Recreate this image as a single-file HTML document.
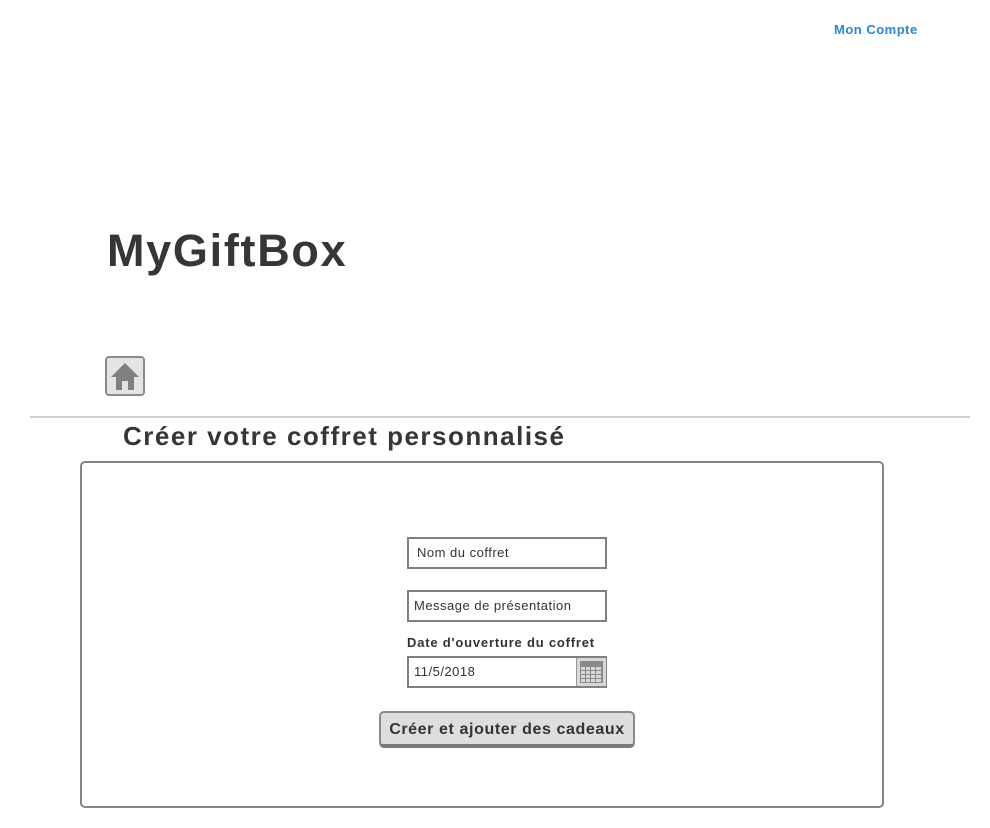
<!DOCTYPE html>
<html><head><meta charset="utf-8"><style>
body{margin:0;width:990px;height:828px;background:#fff;font-family:"Liberation Sans",sans-serif;color:#333;position:relative;overflow:hidden}
.a{position:absolute;white-space:nowrap}
.inp{position:absolute;border:2px solid #808080;box-sizing:border-box;background:#fff;font-size:13px;color:#333;letter-spacing:0.5px;white-space:nowrap}
</style></head><body>
<div class="a" style="left:834px;top:22px;font-size:13px;font-weight:bold;color:#2a86d8;letter-spacing:0.5px">Mon Compte</div>
<div class="a" style="left:107px;top:225px;font-size:45px;font-weight:bold;color:#363636;letter-spacing:1.7px">MyGiftBox</div>
<div class="a" style="left:105px;top:356px;width:40px;height:40px;box-sizing:border-box;border:2px solid #8a8a8a;border-radius:4px;background:#e4e4e4">
<svg width="36" height="36" viewBox="0 0 36 36" style="position:absolute;left:0;top:0"><path d="M18 5 L4 19 H9 V32 H15 V23 H21 V32 H27 V19 H32 Z" fill="#808080"/></svg></div>
<div class="a" style="left:30px;top:416px;width:940px;height:2px;background:#cfcfcf"></div>
<div class="a" style="left:123px;top:421px;font-size:26px;font-weight:bold;color:#363636;letter-spacing:1.5px">Créer votre coffret personnalisé</div>
<div class="a" style="left:80px;top:461px;width:804px;height:347px;box-sizing:border-box;border:2px solid #858585;border-radius:5px"></div>
<div class="inp" style="left:407px;top:537px;width:200px;height:32px;padding:6px 0 0 8px">Nom du coffret</div>
<div class="inp" style="left:407px;top:590px;width:200px;height:32px;padding:6px 0 0 5px">Message de présentation</div>
<div class="a" style="left:407px;top:635px;font-size:13px;font-weight:bold;color:#333;letter-spacing:0.8px">Date d'ouverture du coffret</div>
<div class="inp" style="left:407px;top:656px;width:200px;height:32px;padding:6px 0 0 5px">11/5/2018</div>
<div class="a" style="left:576px;top:658px;width:29px;height:28px;background:#d8d8d8;border-left:1px solid #999">
<svg width="29" height="28" viewBox="0 0 29 28"><rect x="3" y="3" width="23" height="22" fill="#8a8a8a"/><g fill="#d8d8d8"><rect x="4" y="9" width="4" height="3"/><rect x="9" y="9" width="4" height="3"/><rect x="14" y="9" width="4" height="3"/><rect x="19" y="9" width="5" height="3"/><rect x="4" y="13" width="4" height="3"/><rect x="9" y="13" width="4" height="3"/><rect x="14" y="13" width="4" height="3"/><rect x="19" y="13" width="5" height="3"/><rect x="4" y="17" width="4" height="3"/><rect x="9" y="17" width="4" height="3"/><rect x="14" y="17" width="4" height="3"/><rect x="19" y="17" width="5" height="3"/><rect x="4" y="21" width="4" height="3"/><rect x="9" y="21" width="4" height="3"/><rect x="14" y="21" width="4" height="3"/><rect x="19" y="21" width="5" height="3"/></g></svg></div>
<div class="a" style="left:379px;top:711px;width:256px;height:37px;box-sizing:border-box;border:2px solid #8a8a8a;border-bottom:4px solid #7a7a7a;border-radius:5px;background:#dedede;font-size:16px;font-weight:bold;color:#333;text-align:center;line-height:33px;letter-spacing:0.6px">Créer et ajouter des cadeaux</div>
</body></html>
